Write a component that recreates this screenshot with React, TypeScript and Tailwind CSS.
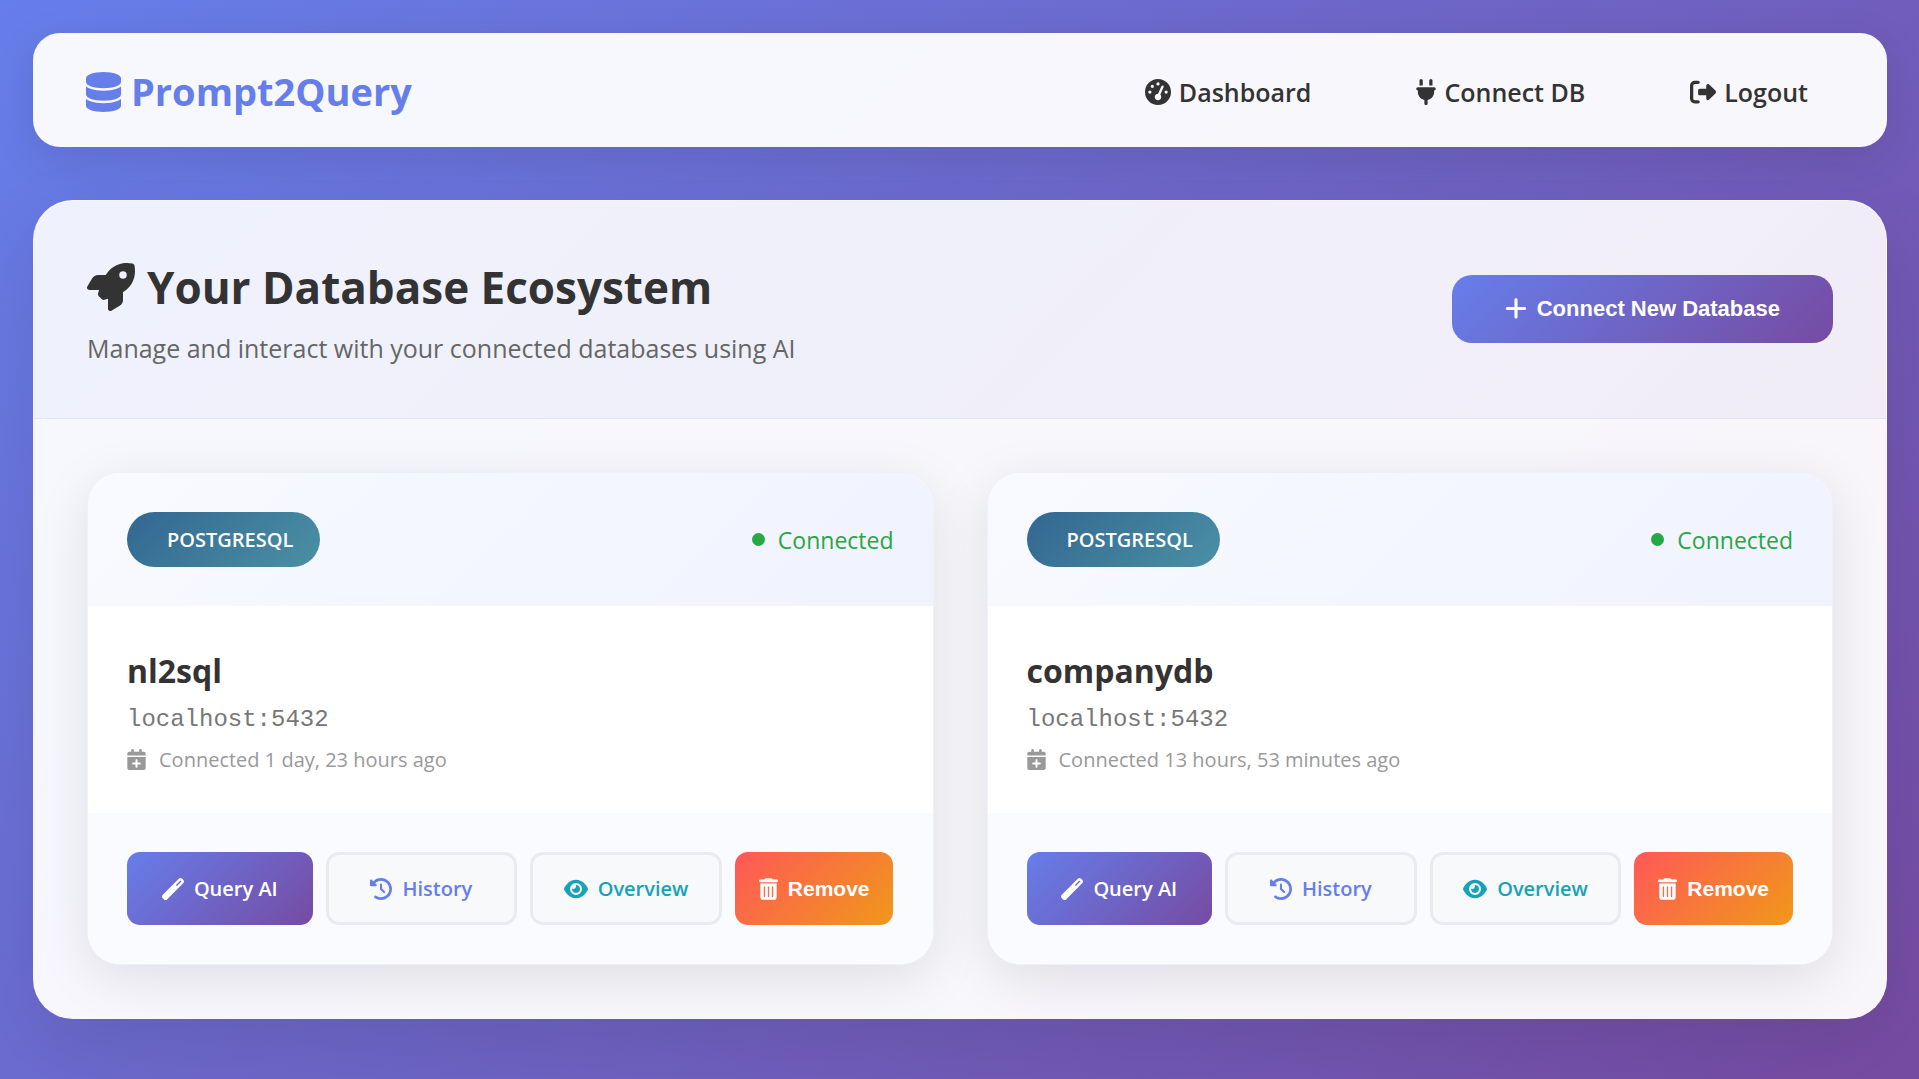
import type { IconType } from "react-icons";
import {
  FaCalendarPlus,
  FaClockRotateLeft,
  FaDatabase,
  FaEye,
  FaGaugeHigh,
  FaPlug,
  FaPlus,
  FaRightFromBracket,
  FaRocket,
  FaTrashCan,
  FaWandMagic,
} from "react-icons/fa6";

type Connection = { name: string; host: string; engine: string; age: string };

const connections: Connection[] = [
  { name: "nl2sql", host: "localhost:5432", engine: "POSTGRESQL", age: "Connected 1 day, 23 hours ago" },
  { name: "companydb", host: "localhost:5432", engine: "POSTGRESQL", age: "Connected 13 hours, 53 minutes ago" },
];

function NavLink({ icon: Icon, label, iconSize }: { icon: IconType; label: string; iconSize: string }) {
  return (
    <a href="#" className="flex items-center gap-2 px-[26px] text-[25px] leading-8 font-semibold text-[#333]">
      <Icon className={iconSize} aria-hidden />
      {label}
    </a>
  );
}

const actionBase = "flex h-[73px] items-center justify-center gap-[10px] rounded-[13px] px-6 whitespace-nowrap";

function ConnectionCard({ name, host, engine, age }: Connection) {
  return (
    <article className="overflow-hidden rounded-[33px] border border-[#eef0fd] bg-white shadow-[0_13px_53px_rgba(0,0,0,0.1)]">
      <div className="flex items-center justify-between bg-linear-135/srgb from-[#f8faff] to-[#f0f2ff] px-[39px] py-[39px]">
        <span className="flex h-[55px] items-center rounded-full bg-linear-135/srgb from-[#336791] to-[#4a90a4] pr-[27px] pl-10 text-xl font-semibold text-white">
          {engine}
        </span>
        <span className="flex items-center gap-[13px] text-[23px] leading-8 text-[#28a745]">
          <span className="size-[13px] rounded-full bg-[#28a745]" />
          Connected
        </span>
      </div>
      <div className="px-[39px] py-10">
        <h2 className="mb-2 text-[32px] leading-[50px] font-bold text-[#333]">{name}</h2>
        <p className="mb-[10px] font-['Liberation_Mono',monospace] text-2xl leading-8 text-[#777]">{host}</p>
        <p className="flex items-center gap-[13px] text-xl leading-[27px] text-[#999]">
          <FaCalendarPlus className="h-[21px] w-[19px]" aria-hidden />
          {age}
        </p>
      </div>
      <div className="flex gap-[13px] bg-[#fafbff] p-[39px]">
        <a href="#" className={`${actionBase} flex-1 bg-linear-135/srgb from-[#667eea] to-[#764ba2] text-xl font-semibold text-white`}>
          <FaWandMagic className="size-[22px]" aria-hidden />
          Query AI
        </a>
        <a href="#" className={`${actionBase} flex-1 border-3 border-[#e9ebee] bg-[#f8f9fb] text-xl font-semibold text-[#667eea]`}>
          <FaClockRotateLeft className="size-[22px]" aria-hidden />
          History
        </a>
        <a href="#" className={`${actionBase} flex-1 border-3 border-[#e9ebee] bg-[#f8f9fb] text-xl font-semibold text-[#17a2b8]`}>
          <FaEye className="h-[22px] w-6" aria-hidden />
          Overview
        </a>
        <button
          type="button"
          className={`${actionBase} bg-linear-135/srgb from-[#ff5858] to-[#f09819] font-['Liberation_Sans',sans-serif] text-[21px] font-bold text-white`}
        >
          <FaTrashCan className="h-[22px] w-[19px]" aria-hidden />
          Remove
        </button>
      </div>
    </article>
  );
}

export default function App() {
  return (
    <div className="min-h-screen bg-linear-135/srgb from-[#667eea] to-[#764ba2] py-[33px] pr-8 pl-[33px] font-['Open_Sans',sans-serif]">
      <header className="mb-[53px] flex min-h-[114px] flex-wrap items-center justify-between rounded-[27px] bg-white/95 px-[53px] pt-[3px] shadow-[0_11px_43px_rgba(0,0,0,0.1)]">
        <a href="#" className="flex items-center gap-[10px] text-[38px] font-bold text-[#667eea]">
          <FaDatabase className="h-10 w-[35px]" aria-hidden />
          Prompt2Query
        </a>
        <nav className="flex gap-[53px]">
          <NavLink icon={FaGaugeHigh} label="Dashboard" iconSize="size-[26px]" />
          <NavLink icon={FaPlug} label="Connect DB" iconSize="h-[26px] w-5" />
          <NavLink icon={FaRightFromBracket} label="Logout" iconSize="size-[26px]" />
        </nav>
      </header>

      <main className="overflow-hidden rounded-[40px] border border-white/20 bg-white/95 shadow-[0_27px_80px_rgba(0,0,0,0.1)]">
        <section className="flex items-center justify-between border-b border-[#667eea]/10 bg-linear-135/srgb from-[#667eea]/5 to-[#764ba2]/5 px-[53px] pt-13 pb-[54px]">
          <div>
            <h1 className="mb-[11px] flex items-center gap-3 text-[44px] leading-[68px] font-bold text-[#333]">
              <FaRocket className="size-12" aria-hidden />
              Your Database Ecosystem
            </h1>
            <p className="text-[25px] leading-8 text-[#666]">Manage and interact with your connected databases using AI</p>
          </div>
          <button
            type="button"
            className="flex h-[68px] items-center gap-[10px] rounded-[20px] bg-linear-135/srgb from-[#667eea] to-[#764ba2] px-[53px] font-['Liberation_Sans',sans-serif] text-[22px] font-bold text-white"
          >
            <FaPlus className="h-[25px] w-[22px]" aria-hidden />
            Connect New Database
          </button>
        </section>
        <section className="grid grid-cols-2 gap-[53px] p-[53px]">
          {connections.map((c) => (
            <ConnectionCard key={c.name} {...c} />
          ))}
        </section>
      </main>
    </div>
  );
}
